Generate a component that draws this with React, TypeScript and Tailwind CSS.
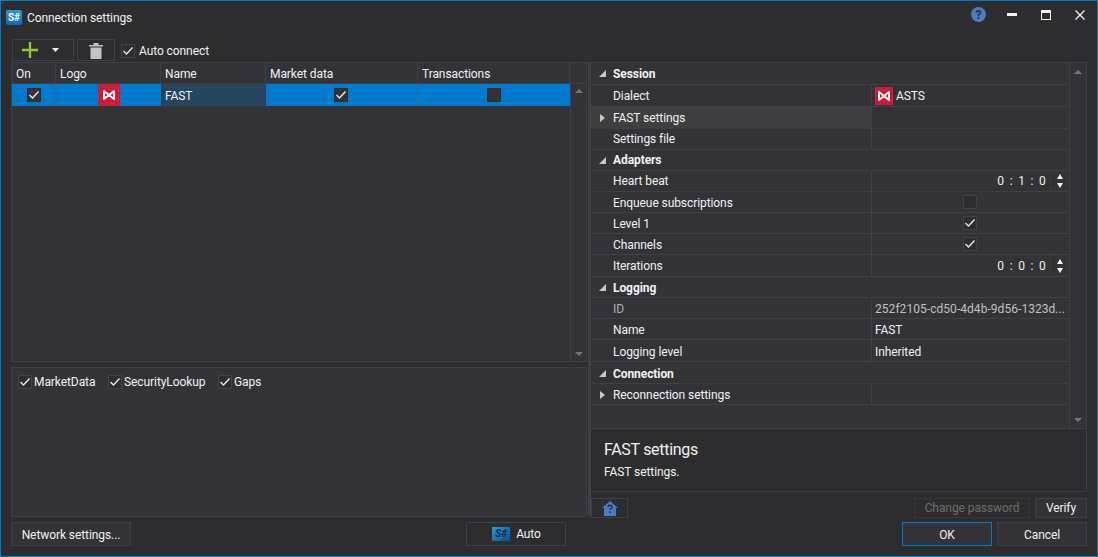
import type { ReactNode } from "react"

const LINE = "border-[#3f3f46]"

function Tick() {
  return (
    <svg width="12" height="12" viewBox="0 0 12 12" fill="none">
      <path d="M1.5 6 L4.5 9 L10.5 2.5" stroke="#e8e8e8" strokeWidth="1.4" />
    </svg>
  )
}

function CheckBox({ checked = true, dark = false }: { checked?: boolean; dark?: boolean }) {
  return (
    <span
      className={`flex h-[14px] w-[14px] shrink-0 items-center justify-center border ${
        dark ? "border-[#2d2d30] bg-[#333337]" : "border-[#434346] bg-[#2d2d30]"
      }`}
    >
      {checked && <Tick />}
    </span>
  )
}

function MoexLogo({ size }: { size: number }) {
  return (
    <span className="flex shrink-0 items-center justify-center bg-[#c81e3c]" style={{ width: size, height: size }}>
      <svg width="12" height="10" viewBox="0 0 12 10" fill="none">
        <path d="M1 1 L6 5 L11 1 V9 L6 5 L1 9 Z" stroke="#fff" strokeWidth="1.8" strokeLinejoin="round" />
      </svg>
    </span>
  )
}

function Triangle({ dir }: { dir: "up" | "down" }) {
  return (
    <svg width="8" height="4" viewBox="0 0 8 4">
      <path d={dir === "up" ? "M0 4 L4 0 L8 4 Z" : "M0 0 L8 0 L4 4 Z"} fill="#77777b" />
    </svg>
  )
}

function Spinner() {
  return (
    <span className="flex h-full w-[19px] shrink-0 flex-col items-center justify-center gap-[4px] border-l border-[#3a3a3e]">
      <svg width="6" height="5" viewBox="0 0 6 5"><path d="M0 5 L3 0 L6 5 Z" fill="#f1f1f1" /></svg>
      <svg width="6" height="5" viewBox="0 0 6 5"><path d="M0 0 L6 0 L3 5 Z" fill="#f1f1f1" /></svg>
    </span>
  )
}

function Btn({ className, children }: { className: string; children: ReactNode }) {
  return (
    <div className={`flex items-center justify-center border border-[#3f3f46] bg-[#333337] ${className}`}>{children}</div>
  )
}

type Row = {
  h: string
  label: string
  group?: boolean
  arrow?: boolean
  hot?: boolean
  dim?: boolean
  pad?: string // nudges the label down where the row text sits lower
  value?: ReactNode
}

const TimeValue = ({ text }: { text: string }) => (
  <div className="flex h-full items-center justify-end">
    <span className="mr-[3px] whitespace-pre tracking-[1.3px]">{text}</span>
    <Spinner />
  </div>
)

const CenterBox = ({ checked }: { checked: boolean }) => (
  <div className="flex h-full items-center justify-center pr-[2px]">
    <CheckBox checked={checked} />
  </div>
)

const rows: Row[] = [
  { h: "h-[22px]", label: "Session", group: true },
  {
    h: "h-[22px]",
    label: "Dialect",
    value: (
      <div className="flex h-full items-center gap-[3px] pl-[3px]">
        <MoexLogo size={18} />
        <span>ASTS</span>
      </div>
    ),
  },
  { h: "h-[22px]", label: "FAST settings", arrow: true, hot: true },
  { h: "h-[21px]", label: "Settings file" },
  { h: "h-[21px]", label: "Adapters", group: true },
  { h: "h-[21px]", label: "Heart beat", value: <TimeValue text="0 : 1 : 0" /> },
  { h: "h-[21px]", label: "Enqueue subscriptions", pad: "pt-[1px]", value: <CenterBox checked={false} /> },
  { h: "h-[21px]", label: "Level 1", pad: "pt-[1px]", value: <CenterBox checked /> },
  { h: "h-[21px]", label: "Channels", pad: "pt-[1px]", value: <CenterBox checked /> },
  { h: "h-[22px]", label: "Iterations", value: <TimeValue text="0 : 0 : 0" /> },
  { h: "h-[21px]", label: "Logging", group: true, pad: "pt-[1px]" },
  {
    h: "h-[21px]",
    label: "ID",
    dim: true,
    pad: "pt-[1px]",
    value: (
      <div className="flex h-full items-center truncate pl-[3px] pt-[1px] tracking-[0.05px] text-[#c0c0c0]">
        252f2105-cd50-4d4b-9d56-1323d...
      </div>
    ),
  },
  { h: "h-[21px]", label: "Name", pad: "pt-[1px]", value: <div className="flex h-full items-center pl-[3px] pt-[1px]">FAST</div> },
  { h: "h-[22px]", label: "Logging level", pad: "pt-[2px]", value: <div className="flex h-full items-center pl-[3px] pt-[2px]">Inherited</div> },
  { h: "h-[22px]", label: "Connection", group: true, pad: "pt-[2px]" },
  { h: "h-[21px]", label: "Reconnection settings", arrow: true, pad: "pt-[1px]" },
]

function PropertyRow({ row }: { row: Row }) {
  return (
    <div className={`flex ${row.h} border-b ${LINE}`}>
      <div
        className={`flex w-[280px] shrink-0 items-center ${row.hot ? "bg-[#3f3f41]" : ""} ${
          row.group ? "font-bold" : ""
        } ${row.dim ? "text-[#b0b0b0]" : ""} ${row.pad ?? ""}`}
      >
        <span className="flex w-[22px] shrink-0 justify-center">
          {row.group && (
            <svg width="7" height="7" viewBox="0 0 7 7"><path d="M7 0 V7 H0 Z" fill="#c8c8c8" /></svg>
          )}
          {row.arrow && (
            <svg width="5" height="8" viewBox="0 0 5 8"><path d="M0 0 L5 4 L0 8 Z" fill="#c8c8c8" /></svg>
          )}
        </span>
        {row.label}
      </div>
      <div className={`min-w-0 flex-1 ${row.group ? "" : `border-l ${LINE}`}`}>{row.value}</div>
    </div>
  )
}

const columns = [
  { w: "w-[44px]", label: "On" },
  { w: "w-[105px]", label: "Logo" },
  { w: "w-[105px]", label: "Name" },
  { w: "w-[152px]", label: "Market data" },
  { w: "w-[152px]", label: "Transactions" },
]

export default function App() {
  return (
    <div
      className="flex h-[557px] w-[1098px] flex-col overflow-hidden border border-[#007acc] bg-[#2d2d30] text-[12px] tracking-[-0.08px] text-[#f1f1f1]"
      style={{ fontFamily: "Roboto, sans-serif" }}
    >
      {/* Title bar */}
      <div className="flex h-[38px] shrink-0 items-start">
        <div className="ml-[5px] mt-[9px] flex h-[15px] w-[16px] items-center justify-center rounded-[2px] bg-gradient-to-b from-[#2a9ae0] to-[#0a68b8] text-[10px] leading-none font-bold text-white">
          S#
        </div>
        <span className="ml-[5px] mt-[10px] leading-[15px]">Connection settings</span>
        <div className="ml-auto mr-[12px] mt-[6px] flex items-center">
          <span className="flex h-[15px] w-[15px] items-center justify-center rounded-full bg-[#4a7cc4] text-[12px] leading-none font-bold text-[#22304a]">?</span>
          <span className="ml-[21px] h-[3px] w-[10px] bg-[#f1f1f1]" />
          <span className="ml-[24px] h-[10px] w-[10px] border border-t-[3px] border-[#f1f1f1]" />
          <svg className="ml-[24px]" width="10" height="10" viewBox="0 0 10 10">
            <path d="M0.5 0.5 L9.5 9.5 M9.5 0.5 L0.5 9.5" stroke="#f1f1f1" strokeWidth="1.4" />
          </svg>
        </div>
      </div>

      {/* Body */}
      <div className="flex h-[478px] shrink-0 pl-[10px]">
        {/* Left side */}
        <div className="flex w-[576px] shrink-0 flex-col">
          <div className="flex h-[23px] shrink-0 items-start pl-[1px]">
            <div className={`flex h-[22px] w-[62px] items-center border ${LINE}`}>
              <svg className="ml-[9px]" width="16" height="16" viewBox="0 0 16 16">
                <path d="M8 0 V16 M0 8 H16" stroke="#8dc63f" strokeWidth="2.4" />
              </svg>
              <svg className="ml-[14px]" width="7" height="4" viewBox="0 0 7 4"><path d="M0 0 H7 L3.5 4 Z" fill="#f1f1f1" /></svg>
            </div>
            <div className={`ml-[3px] flex h-[22px] w-[38px] items-center justify-center border ${LINE}`}>
              <svg width="14" height="17" viewBox="0 0 14 17">
                <path d="M0 3 H14 V4.5 H0 Z M4.5 1 H9.5 V3 H4.5 Z M1.5 5.5 H12.5 V17 H1.5 Z" fill="#c4c4c4" />
              </svg>
            </div>
            <div className="ml-[6px] mt-[1px] flex h-[22px] items-center gap-[4px]">
              <CheckBox />
              <span>Auto connect</span>
            </div>
          </div>

          {/* Connections table */}
          <div className={`flex h-[300px] shrink-0 flex-col border ${LINE} bg-[#333337]`}>
            <div className={`flex h-[21px] shrink-0 border-b ${LINE}`}>
              {columns.map((c) => (
                <div key={c.label} className={`${c.w} flex shrink-0 items-center border-r pl-[4px] pt-[1px] ${LINE}`}>
                  {c.label}
                </div>
              ))}
            </div>
            <div className="flex min-h-0 flex-1">
              <div className="w-[558px] shrink-0">
                <div className="flex h-[22px] bg-[#007acc]">
                  <div className="flex w-[44px] items-center justify-center border-r border-[#2d6f9e]">
                    <CheckBox dark />
                  </div>
                  <div className="flex w-[105px] justify-center border-r border-[#2d6f9e] pl-[1px]">
                    <MoexLogo size={22} />
                  </div>
                  <div className="flex w-[105px] items-center bg-[#26455e] pl-[4px] pt-[1px]">FAST</div>
                  <div className="flex w-[152px] items-center justify-center border-r border-[#2d6f9e] pr-[2px]">
                    <CheckBox dark />
                  </div>
                  <div className="flex w-[152px] items-center justify-center pr-[1px]">
                    <CheckBox checked={false} dark />
                  </div>
                </div>
              </div>
              <div className={`flex flex-1 flex-col items-center justify-between border-l py-[5px] ${LINE}`}>
                <Triangle dir="up" />
                <Triangle dir="down" />
              </div>
            </div>
          </div>

          {/* Message types */}
          <div className={`mt-[5px] flex h-[150px] shrink-0 items-start border ${LINE} bg-[#333337] pl-[6px] pt-[6px] leading-[16px]`}>
            <span className="flex w-[90px] items-center gap-[2px]"><CheckBox /><span>MarketData</span></span>
            <span className="flex w-[110px] items-center gap-[2px]"><CheckBox /><span>SecurityLookup</span></span>
            <span className="flex items-center gap-[2px]"><CheckBox /><span>Gaps</span></span>
          </div>
        </div>

        {/* Splitter */}
        <div className="mt-[23px] mb-[1px] ml-[1px] w-[3px] shrink-0 bg-[#3f3f46]" />

        {/* Property grid */}
        <div className="flex w-[496px] shrink-0 flex-col pt-[23px]">
          <div className={`flex h-[367px] shrink-0 border-y border-r ${LINE} bg-[#333337]`}>
            <div className="w-[478px] shrink-0">
              {rows.map((r) => (
                <PropertyRow key={r.label} row={r} />
              ))}
            </div>
            <div className={`flex flex-1 flex-col items-center justify-between border-l pt-[7px] pb-[6px] ${LINE}`}>
              <Triangle dir="up" />
              <Triangle dir="down" />
            </div>
          </div>
          <div className={`flex h-[63px] shrink-0 flex-col border-r border-b ${LINE} pl-[13px] pt-[11px]`}>
            <div className="text-[16px] leading-[20px] tracking-[-0.3px]">FAST settings</div>
            <div className="mt-[4px] leading-[16px]">FAST settings.</div>
          </div>
          <div className="mt-[6px] flex h-[20px] shrink-0 items-stretch">
            <div className={`flex w-[37px] items-center justify-center border ${LINE}`}>
              <svg width="16" height="15" viewBox="0 0 16 15">
                <path d="M8 0 L16 7 H14 V15 H2 V7 H0 Z" fill="#4a7cc4" />
                <path d="M6 6 C6 3.6 10 3.6 10 6 C10 7.6 8 7.4 8 9 M8 10.5 V12" stroke="#22304a" strokeWidth="1.4" fill="none" />
              </svg>
            </div>
            <div className="ml-[286px] flex w-[116px] items-center justify-center border border-[#36363a] text-[#6d6d6d]">
              Change password
            </div>
            <Btn className="ml-[5px] w-[52px]">Verify</Btn>
          </div>
        </div>
      </div>

      {/* Footer */}
      <div className="mt-[5px] flex h-[24px] shrink-0 pl-[10px]">
        <Btn className="w-[120px] pt-[1px]">Network settings...</Btn>
        <div className={`ml-[335px] flex w-[100px] items-center justify-center gap-[6px] border pl-[1px] ${LINE}`}>
          <span className="flex h-[14px] w-[18px] items-center justify-center bg-gradient-to-br from-[#2a9ae0] to-[#0a4f94] text-[10px] leading-none font-bold italic text-[#1e2a3a]">
            S#
          </span>
          <span>Auto</span>
        </div>
        <Btn className="ml-[336px] w-[90px] border-[#007acc] pt-[1px]">OK</Btn>
        <Btn className="ml-[5px] w-[90px] pt-[1px]">Cancel</Btn>
      </div>
    </div>
  )
}
